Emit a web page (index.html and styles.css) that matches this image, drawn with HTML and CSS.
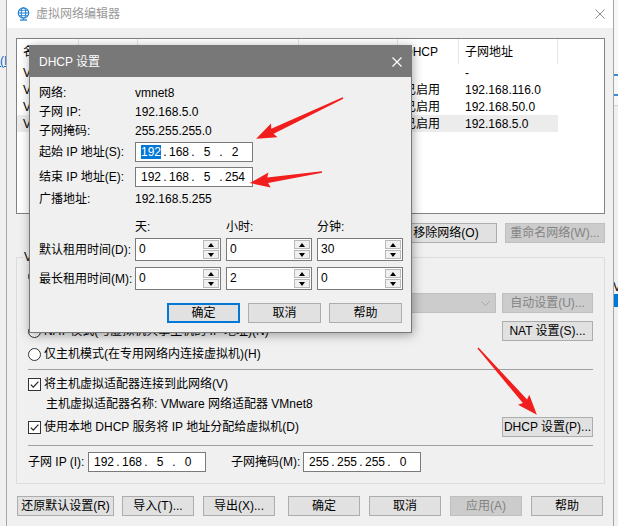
FILE: index.html
```html
<!DOCTYPE html>
<html lang="zh-CN">
<head>
<meta charset="utf-8">
<title>虚拟网络编辑器</title>
<link rel="stylesheet" href="styles.css">
</head>
<body>
<div class="screen">
  <div class="edge-left"><span class="edge-link">(I</span></div>

  <div class="win">
    <div class="win-title">
      <svg class="globe" width="13" height="14" viewBox="0 0 13 14">
        <circle cx="6.5" cy="6" r="5.2" fill="none" stroke="#1f7fd1" stroke-width="1.2"/>
        <ellipse cx="6.5" cy="6" rx="2.2" ry="5.2" fill="none" stroke="#1f7fd1" stroke-width="1"/>
        <line x1="1.3" y1="6" x2="11.7" y2="6" stroke="#1f7fd1" stroke-width="1"/>
        <line x1="2.2" y1="3.4" x2="10.8" y2="3.4" stroke="#1f7fd1" stroke-width="0.8"/>
        <line x1="2.2" y1="8.6" x2="10.8" y2="8.6" stroke="#1f7fd1" stroke-width="0.8"/>
        <path d="M6.5 11.2v1.4" stroke="#1f7fd1" stroke-width="1"/>
        <path d="M3 13h7" stroke="#1f7fd1" stroke-width="1.3"/>
      </svg>
      <span class="win-title-text">虚拟网络编辑器</span>
      <svg class="win-close" width="10" height="10" viewBox="0 0 10 10">
        <path d="M0.5 0.5L9.5 9.5M9.5 0.5L0.5 9.5" stroke="#8c8c8c" stroke-width="1"/>
      </svg>
    </div>

    <div class="win-body">
      <div class="list">
        <div class="list-head">
          <div class="cell">名称</div>
          <div class="cell"></div>
          <div class="cell"></div>
          <div class="cell"></div>
          <div class="cell">DHCP</div>
          <div class="cell">子网地址</div>
        </div>
        <div class="list-row">
          <div class="cell">VMnet0</div><div class="cell"></div><div class="cell"></div><div class="cell"></div><div class="cell"></div><div class="cell">-</div>
        </div>
        <div class="list-row">
          <div class="cell">VMnet1</div><div class="cell"></div><div class="cell"></div><div class="cell"></div><div class="cell">已启用</div><div class="cell">192.168.116.0</div>
        </div>
        <div class="list-row">
          <div class="cell">VMnet2</div><div class="cell"></div><div class="cell"></div><div class="cell"></div><div class="cell">已启用</div><div class="cell">192.168.50.0</div>
        </div>
        <div class="list-row sel">
          <div class="cell">VMnet8</div><div class="cell"></div><div class="cell"></div><div class="cell"></div><div class="cell">已启用</div><div class="cell">192.168.5.0</div>
        </div>
      </div>

      <div class="list-actions">
        <button class="btn w102"></button>
        <button class="btn w102">移除网络(O)</button>
        <button class="btn w100 disabled">重命名网络(W)...</button>
      </div>

      <div class="group">
        <span class="group-legend">VMnet 信息</span>
        <div class="g-row h20">
          <span class="radio"></span>
        </div>
        <div class="g-row h20 mt7">
          <div class="combo">
            <svg width="9" height="5" viewBox="0 0 9 5"><path d="M0.5 0.5L4.5 4.5L8.5 0.5" fill="none" stroke="#a6a6a6" stroke-width="1"/></svg>
          </div>
          <button class="btn w91 disabled gap-left">自动设置(U)...</button>
        </div>
        <div class="g-row h20 mt8">
          <span class="radio"></span><span>NAT 模式(与虚拟机共享主机的 IP 地址)(N)</span>
          <button class="btn w91 push">NAT 设置(S)...</button>
        </div>
        <div class="g-row h18 mt4">
          <span class="radio"></span><span>仅主机模式(在专用网络内连接虚拟机)(H)</span>
        </div>
        <div class="sep mt6"></div>
        <div class="g-row h18 mt5">
          <span class="check"><svg width="11" height="11" viewBox="0 0 11 11"><path d="M1.8 5.6L4.3 8.1L9.4 2.6" fill="none" stroke="#222" stroke-width="1.2"/></svg></span>
          <span>将主机虚拟适配器连接到此网络(V)</span>
        </div>
        <div class="g-row h18 mt2">
          <span class="indent2">主机虚拟适配器名称: VMware 网络适配器 VMnet8</span>
        </div>
        <div class="g-row h20 mt4">
          <span class="check"><svg width="11" height="11" viewBox="0 0 11 11"><path d="M1.8 5.6L4.3 8.1L9.4 2.6" fill="none" stroke="#222" stroke-width="1.2"/></svg></span>
          <span>使用本地 DHCP 服务将 IP 地址分配给虚拟机(D)</span>
          <button class="btn w91 push">DHCP 设置(P)...</button>
        </div>
        <div class="sep mt8"></div>
        <div class="g-row h20 mt6">
          <span class="lbl-ip">子网 IP (I):</span>
          <div class="ip"><span class="f">192</span><span class="d">.</span><span class="f">168</span><span class="d">.</span><span class="f">5</span><span class="d">.</span><span class="f">0</span></div>
          <span class="lbl-mask">子网掩码(M):</span>
          <div class="ip"><span class="f">255</span><span class="d">.</span><span class="f">255</span><span class="d">.</span><span class="f">255</span><span class="d">.</span><span class="f">0</span></div>
        </div>
      </div>

      <div class="footer">
        <button class="btn w97">还原默认设置(R)</button>
        <button class="btn w72 ml8">导入(T)...</button>
        <button class="btn w72 ml9">导出(X)...</button>
        <button class="btn w72 ml13">确定</button>
        <button class="btn w72 ml9">取消</button>
        <button class="btn w72 ml9 disabled">应用(A)</button>
        <button class="btn w72 ml9">帮助</button>
      </div>
    </div>
  </div>

  <div class="edge-right">
    <div class="er-top"><i class="er-blue"></i><i class="er-blue second"></i></div>
    <div class="er-v">V</div>
    <div class="er-sel"></div>
  </div>

  <div class="dialog">
    <div class="dlg-title">
      <span>DHCP 设置</span>
      <svg class="dlg-close" width="10" height="10" viewBox="0 0 10 10">
        <path d="M0.5 0.5L9.5 9.5M9.5 0.5L0.5 9.5" stroke="#ffffff" stroke-width="1.2"/>
      </svg>
    </div>
    <div class="dlg-body">
      <div class="d-row h18"><span class="d-label">网络:</span><span>vmnet8</span></div>
      <div class="d-row h19"><span class="d-label">子网 IP:</span><span>192.168.5.0</span></div>
      <div class="d-row h19"><span class="d-label">子网掩码:</span><span>255.255.255.0</span></div>
      <div class="d-row h20 mt2">
        <span class="d-label">起始 IP 地址(S):</span>
        <div class="ip"><span class="f"><span class="hl">192</span></span><span class="d">.</span><span class="f">168</span><span class="d">.</span><span class="f">5</span><span class="d">.</span><span class="f">2</span></div>
      </div>
      <div class="d-row h20 mt5">
        <span class="d-label">结束 IP 地址(E):</span>
        <div class="ip"><span class="f">192</span><span class="d">.</span><span class="f">168</span><span class="d">.</span><span class="f">5</span><span class="d">.</span><span class="f">254</span></div>
      </div>
      <div class="d-row h18 mt3"><span class="d-label">广播地址:</span><span>192.168.5.255</span></div>
      <div class="d-row h18 mt10">
        <span class="d-label"></span>
        <span class="col-h">天:</span><span class="col-h">小时:</span><span class="col-h">分钟:</span>
      </div>
      <div class="d-row h23 mt2">
        <span class="d-label">默认租用时间(D):</span>
        <div class="spin"><span class="spin-val">0</span><span class="spin-btns"><span class="spin-btn"><i class="tri up"></i></span><span class="spin-btn"><i class="tri down"></i></span></span></div>
        <div class="spin"><span class="spin-val">0</span><span class="spin-btns"><span class="spin-btn"><i class="tri up"></i></span><span class="spin-btn"><i class="tri down"></i></span></span></div>
        <div class="spin"><span class="spin-val">30</span><span class="spin-btns"><span class="spin-btn"><i class="tri up"></i></span><span class="spin-btn"><i class="tri down"></i></span></span></div>
      </div>
      <div class="d-row h23 mt6">
        <span class="d-label">最长租用时间(M):</span>
        <div class="spin"><span class="spin-val">0</span><span class="spin-btns"><span class="spin-btn"><i class="tri up"></i></span><span class="spin-btn"><i class="tri down"></i></span></span></div>
        <div class="spin"><span class="spin-val">2</span><span class="spin-btns"><span class="spin-btn"><i class="tri up"></i></span><span class="spin-btn"><i class="tri down"></i></span></span></div>
        <div class="spin"><span class="spin-val">0</span><span class="spin-btns"><span class="spin-btn"><i class="tri up"></i></span><span class="spin-btn"><i class="tri down"></i></span></span></div>
      </div>
      <div class="d-actions">
        <button class="btn w73 default">确定</button>
        <button class="btn w73">取消</button>
        <button class="btn w73">帮助</button>
      </div>
    </div>
  </div>

  <svg class="arrows" width="618" height="526" viewBox="0 0 618 526">
    <g fill="#f21d1d">
      <polygon transform="translate(343 98) rotate(154.8)" points="0,-0.7 78,-2.8 76,-7.5 96,0 76,7.5 78,2.8 0,0.7"/>
      <polygon transform="translate(322 172) rotate(171.3)" points="0,-0.7 55,-2.8 53,-7.5 73,0 53,7.5 55,2.8 0,0.7"/>
      <polygon transform="translate(478 348) rotate(48.6)" points="0,-0.7 71,-2.8 69,-7.5 89,0 69,7.5 71,2.8 0,0.7"/>
    </g>
  </svg>
</div>
</body>
</html>
```

FILE: styles.css
```css
* { box-sizing: border-box; }
html, body { margin: 0; padding: 0; }
body {
  width: 618px;
  height: 526px;
  overflow: hidden;
  background: #f0f0f0;
  font-family: "Liberation Sans", "Noto Sans CJK SC", sans-serif;
  font-size: 12px;
  line-height: 16px;
  color: #000;
}
.screen {
  position: relative;
  display: flex;
  width: 618px;
  height: 526px;
  overflow: hidden;
}

/* left strip: window behind */
.edge-left {
  width: 6px;
  flex: none;
  background: #f0f0f0;
  padding-top: 54px;
  overflow: hidden;
}
.edge-link {
  display: block;
  color: #0066cc;
  text-decoration: underline;
  white-space: nowrap;
  line-height: 14px;
}

/* main window */
.win {
  width: 608px;
  flex: none;
  border-left: 1px solid #a6a6a6;
  border-right: 1px solid #a6a6a6;
  background: #f0f0f0;
  display: flex;
  flex-direction: column;
}
.win-title {
  height: 28px;
  background: #fff;
  display: flex;
  align-items: center;
  padding: 0 8px 0 10px;
}
.globe { flex: none; }
.win-title-text {
  margin-left: 6px;
  color: #999;
}
.win-close { margin-left: auto; }

.win-body {
  padding: 10px 8px 0 9px;
}

/* list */
.list {
  height: 176px;
  border: 1px solid #828282;
  background: #fff;
}
.list-head, .list-row {
  display: grid;
  grid-template-columns: 62px 59px 161px 99px 61px 99px;
  width: 541px;
}
.list-head { height: 25px; }
.list-head .cell {
  border-right: 1px solid #e5e5e5;
  display: flex;
  align-items: center;
}
.cell {
  padding-left: 6px;
  white-space: nowrap;
  overflow: hidden;
}
.list-row {
  height: 17px;
  align-items: center;
}
.list-row.sel { background: #ececec; }

.list-actions {
  display: flex;
  justify-content: flex-end;
  gap: 8px;
  margin-top: 9px;
}

/* buttons */
.btn {
  height: 20px;
  padding: 0;
  margin: 0;
  border: 1px solid #adadad;
  background: #e1e1e1;
  color: #000;
  font: inherit;
  line-height: 16px;
  white-space: nowrap;
  display: flex;
  align-items: center;
  justify-content: center;
  flex: none;
}
.btn.disabled {
  background: #cccccc;
  border-color: #bfbfbf;
  color: #838383;
}
.btn.default { border: 2px solid #0078d7; }
.w72 { width: 72px; }
.w73 { width: 73px; }
.w91 { width: 91px; }
.w97 { width: 97px; }
.w100 { width: 100px; }
.w102 { width: 102px; }
.ml8 { margin-left: 8px; }
.ml9 { margin-left: 9px; }
.ml13 { margin-left: 13px; }

/* group box */
.group {
  position: relative;
  border: 1px solid #dcdcdc;
  margin-top: 14px;
  padding: 8px 11px 11px 11px;
}
.group-legend {
  position: absolute;
  top: -8px;
  left: 6px;
  padding: 0 1px;
  background: #f0f0f0;
  line-height: 14px;
}
.g-row {
  display: flex;
  align-items: center;
  white-space: nowrap;
}
.h18 { height: 18px; }
.h19 { height: 19px; }
.h20 { height: 20px; }
.h23 { height: 23px; }
.mt2 { margin-top: 2px; }
.mt3 { margin-top: 3px; }
.mt4 { margin-top: 4px; }
.mt5 { margin-top: 5px; }
.mt6 { margin-top: 6px; }
.mt7 { margin-top: 7px; }
.mt8 { margin-top: 8px; }
.mt10 { margin-top: 10px; }
.push { margin-left: auto; }
.gap-left { margin-left: 6px; }
.indent2 { padding-left: 18px; }

.radio {
  width: 13px;
  height: 13px;
  border: 1px solid #333;
  border-radius: 50%;
  background: #fff;
  margin-right: 3px;
  flex: none;
}
.check {
  width: 13px;
  height: 13px;
  border: 1px solid #333;
  background: #fff;
  margin-right: 3px;
  flex: none;
  display: flex;
  align-items: center;
  justify-content: center;
}
.combo {
  margin-left: auto;
  width: 376px;
  height: 20px;
  border: 1px solid #bfbfbf;
  background: #cccccc;
  display: flex;
  align-items: center;
  justify-content: flex-end;
  padding-right: 5px;
}
.sep {
  height: 1px;
  background: #a0a0a0;
}
.lbl-ip { width: 60px; flex: none; }
.lbl-mask { width: 72px; flex: none; margin-left: 25px; }

/* ip address control */
.ip {
  width: 118px;
  height: 20px;
  border: 1px solid #7a7a7a;
  background: #fff;
  display: flex;
  align-items: center;
  padding-left: 3px;
  flex: none;
}
.ip .f {
  width: 24px;
  text-align: center;
}
.ip .d {
  width: 4px;
  text-align: center;
}
.hl {
  background: #0078d7;
  color: #fff;
  line-height: 14px;
  display: inline-block;
}

/* footer */
.footer {
  display: flex;
  margin-top: 12px;
  padding-left: 1px;
}

/* right strip: window behind */
.edge-right {
  width: 4px;
  flex: none;
  background: #f0f0f0;
  overflow: hidden;
}
.er-top {
  height: 106px;
  background: #f7f7f7;
  border-bottom: 1px solid #d0d0d0;
  padding-top: 74px;
}
.er-blue {
  display: block;
  height: 2px;
  background: #3b8ed6;
}
.er-blue.second { margin-top: 18px; }
.er-v {
  margin-top: 175px;
  line-height: 12px;
  height: 12px;
  white-space: nowrap;
  margin-left: -1px;
}
.er-sel {
  margin-top: 1px;
  height: 13px;
  background: #0078d7;
}

/* DHCP dialog */
.dialog {
  position: absolute;
  left: 29px;
  top: 45px;
  width: 383px;
  height: 288px;
  border: 1px solid #787878;
  background: #f0f0f0;
  box-shadow: 1px 2px 10px rgba(0, 0, 0, 0.35);
  display: flex;
  flex-direction: column;
}
.dlg-title {
  height: 31px;
  flex: none;
  background: #787878;
  color: #fff;
  display: flex;
  align-items: center;
  padding: 0 9px 0 9px;
}
.dlg-close { margin-left: auto; }
.dlg-body {
  padding: 7px 9px 0 9px;
  display: flex;
  flex-direction: column;
}
.d-row {
  display: flex;
  align-items: center;
  white-space: nowrap;
}
.d-label {
  width: 96px;
  flex: none;
}
.col-h { width: 91px; flex: none; }

.spin {
  width: 86px;
  height: 23px;
  border: 1px solid #7a7a7a;
  background: #fff;
  display: flex;
  flex: none;
  margin-right: 5px;
}
.spin-val {
  flex: 1;
  padding: 0 0 2px 3px;
  display: flex;
  align-items: center;
}
.spin-btns {
  width: 17px;
  display: flex;
  flex-direction: column;
  gap: 1px;
  padding: 1px 1px 1px 0;
}
.spin-btn {
  flex: 1;
  border: 1px solid #b9b9b9;
  background: #f0f0f0;
  display: flex;
  align-items: center;
  justify-content: center;
}
.tri {
  width: 0;
  height: 0;
  border-left: 3.5px solid transparent;
  border-right: 3.5px solid transparent;
}
.tri.up { border-bottom: 4px solid #000; }
.tri.down { border-top: 4px solid #000; }

.d-actions {
  display: flex;
  justify-content: flex-end;
  gap: 8px;
  margin-top: 13px;
}

/* annotation arrows over the screenshot */
.arrows {
  position: absolute;
  left: 0;
  top: 0;
  pointer-events: none;
}
```
